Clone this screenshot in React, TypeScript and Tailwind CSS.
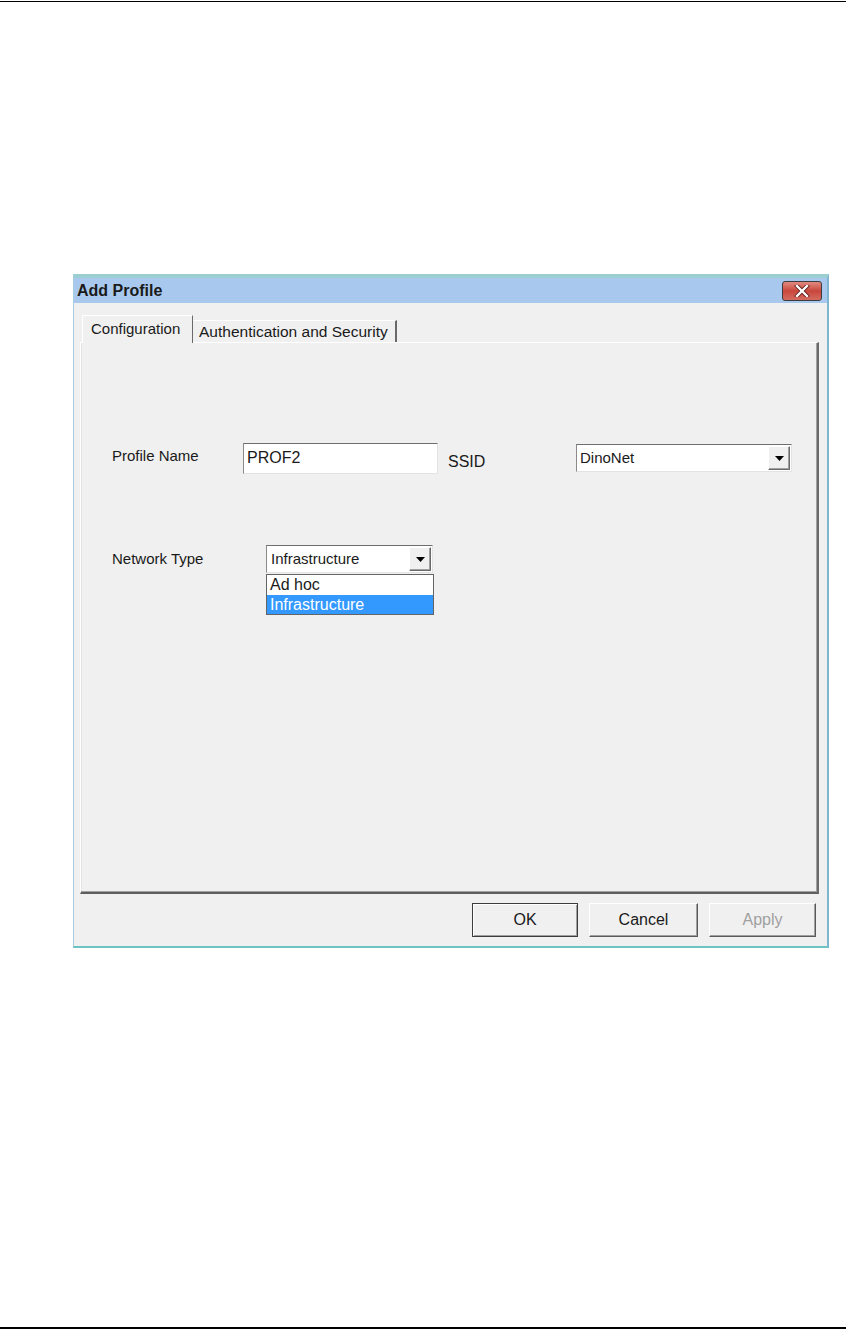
import { useState } from "react";

function DownArrow() {
  return (
    <svg width="9" height="5" viewBox="0 0 9 5">
      <path d="M0 0 H9 L4.5 5 Z" fill="#000" />
    </svg>
  );
}

function ComboArrow({ h = "h-[24px]" }: { h?: string }) {
  return (
    <div
      className={`flex ${h} w-[22px] items-center justify-center border border-t-white border-l-white border-r-[#6a6a6a] border-b-[#6a6a6a] bg-[#f0f0f0] shadow-[inset_-1px_-1px_0_#a0a0a0]`}
    >
      <DownArrow />
    </div>
  );
}

export default function App() {
  const [networkType, setNetworkType] = useState("Infrastructure");
  const options = ["Ad hoc", "Infrastructure"];

  return (
    <div
      className="flex h-[1329px] w-[846px] flex-col bg-white text-[#1a1a1a]"
      style={{ fontFamily: '"Liberation Sans", Arial, sans-serif' }}
    >
      {/* page rule top */}
      <div className="mt-px h-px w-full bg-black" />

      {/* Dialog */}
      <div className="ml-[73px] mt-[272px] flex w-[756px] flex-col border-t-4 border-r-2 border-b-2 border-l border-t-[#9ccfd2] border-r-[#7fb6cf] border-b-[#6cc3c3] border-l-[#a9cde0] bg-[#f0f0f0]">
        {/* Title bar */}
        <div className="flex h-[25px] items-center justify-between bg-[#a8c9ed] pl-[3px] pr-[5px]">
          <span className="text-[16px] font-bold leading-none">Add Profile</span>
          <div className="flex h-[20px] w-[40px] items-center justify-center rounded-[3px] border border-[#3c3c3c] bg-gradient-to-b from-[#e08a80] via-[#c9463c] to-[#d46b60]">
            <svg width="16" height="12" viewBox="0 0 16 12">
              <path d="M3 1 L13 11 M13 1 L3 11" stroke="#5a1a16" strokeWidth="4" strokeLinecap="square" />
              <path d="M3 1 L13 11 M13 1 L3 11" stroke="#fff" strokeWidth="2.4" strokeLinecap="square" />
            </svg>
          </div>
        </div>

        {/* Body */}
        <div className="flex flex-col pl-[6px] pr-[8px] pt-[12px] pb-[9px]">
          {/* Tabs */}
          <div className="relative z-10 -mb-px ml-[2px] flex items-end">
            <div className="flex h-[28px] w-[111px] items-center border-l border-t border-r border-l-white border-t-white border-r-[#6a6a6a] bg-[#f0f0f0] pl-[8px] text-[15px]">
              Configuration
            </div>
            <div className="mb-px flex h-[22px] w-[204px] items-center border-t border-r-2 border-t-white border-r-[#6a6a6a] pl-[6px] text-[15.5px]">
              Authentication and Security
            </div>
          </div>

          {/* Panel */}
          <div className="relative h-[552px] border-t border-l border-r-2 border-b-2 border-t-white border-l-white border-r-[#6a6a6a] border-b-[#5f5f5f] pl-[31px] pt-[99px] shadow-[inset_-1px_-1px_0_#a0a0a0,inset_1px_0_0_#e3e3e3]">
            {/* Profile Name / SSID */}
            <div className="flex items-center">
              <div className="-mt-[4px] w-[131px] text-[15px]">Profile Name</div>
              <div className="flex h-[31px] w-[195px] items-center border border-t-[#6e6e6e] border-l-[#8a8a8a] border-r-[#e3e3e3] border-b-[#e3e3e3] bg-white pl-[3px] text-[16px]">
                PROF2
              </div>
              <div className="ml-[10px] w-[128px] pt-[8px] text-[16px]">SSID</div>
              <div className="flex h-[28px] w-[216px] items-center justify-between border border-t-[#6e6e6e] border-l-[#8a8a8a] border-r-[#e3e3e3] border-b-[#e3e3e3] bg-white pl-[3px] pr-px text-[15px]">
                <span>DinoNet</span>
                <ComboArrow />
              </div>
            </div>

            {/* Network Type */}
            <div className="mt-[71px] flex items-center">
              <div className="w-[154px] text-[15px]">Network Type</div>
              <div className="relative">
                <div className="flex h-[28px] w-[167px] items-center justify-between border border-t-[#6e6e6e] border-l-[#8a8a8a] border-r-[#e3e3e3] border-b-[#e3e3e3] bg-white pl-[4px] pr-px text-[15px]">
                  <span>{networkType}</span>
                  <ComboArrow />
                </div>
                {/* open list */}
                <div className="absolute left-0 top-[29px] w-[168px] border border-[#646464] bg-white text-[16px]">
                  {options.map((o) => (
                    <div
                      key={o}
                      onClick={() => setNetworkType(o)}
                      className={
                        o === networkType
                          ? "flex h-[19px] items-center bg-[#3399ff] pl-[3px] text-white"
                          : "flex h-[20px] items-center pl-[3px]"
                      }
                    >
                      {o}
                    </div>
                  ))}
                </div>
              </div>
            </div>
          </div>

          {/* Buttons */}
          <div className="mt-[9px] flex justify-end gap-[11px] pr-[3px]">
            <button className="h-[34px] w-[106px] border border-[#3c3c3c] bg-[#f0f0f0] text-[16px] shadow-[inset_1px_1px_0_#fff,inset_-1px_-1px_0_#a0a0a0]">
              OK
            </button>
            <button className="h-[34px] w-[109px] border border-t-white border-l-white border-r-[#5a5a5a] border-b-[#5a5a5a] bg-[#f0f0f0] text-[16px] shadow-[inset_-1px_-1px_0_#a0a0a0]">
              Cancel
            </button>
            <button className="h-[34px] w-[107px] border border-t-white border-l-white border-r-[#5a5a5a] border-b-[#5a5a5a] bg-[#f0f0f0] text-[16px] text-[#a0a0a0] shadow-[inset_-1px_-1px_0_#a0a0a0]">
              Apply
            </button>
          </div>
        </div>
      </div>

      <div className="flex-1" />
      {/* page rule bottom */}
      <div className="h-[2px] w-full bg-black" />
    </div>
  );
}
